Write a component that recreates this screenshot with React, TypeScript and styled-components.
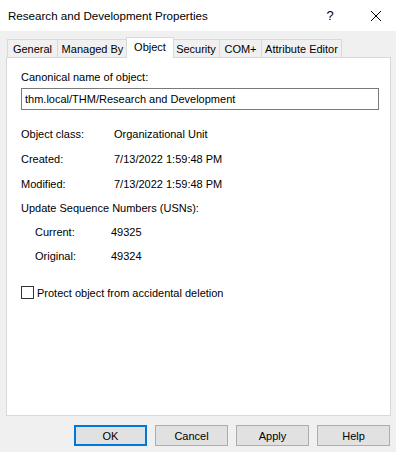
import styled, { createGlobalStyle } from 'styled-components';

const GlobalStyle = createGlobalStyle`
  html, body {
    margin: 0;
    padding: 0;
    background: #f0f0f0;
  }
  body {
    font-family: "Liberation Sans", Arial, sans-serif;
    font-size: 11px;
    color: #000000;
  }
`;

const Window = styled.div`
  width: 396px;
  height: 452px;
  display: flex;
  flex-direction: column;
  background: #f0f0f0;
`;

const TitleBar = styled.div`
  height: 31px;
  background: #ffffff;
  display: flex;
  align-items: center;
  padding-left: 8px;
`;

const Title = styled.div`
  flex: 1;
  font-size: 11.6px;
  color: #000000;
`;

const HelpGlyph = styled.div`
  width: 14px;
  margin-right: 33px;
  font-size: 13px;
  text-align: center;
`;

const CloseButton = styled.div`
  width: 12px;
  height: 12px;
  margin-right: 14px;
  display: flex;
`;

const Body = styled.div`
  flex: 1;
  display: flex;
  flex-direction: column;
  padding: 6px 6px 0 6px;
`;

const TabRow = styled.div`
  height: 20px;
  display: flex;
  align-items: flex-end;
  padding-left: 1px;
`;

const Tab = styled.div<{ $w: number; $active?: boolean }>`
  box-sizing: border-box;
  width: ${(p) => p.$w}px;
  height: ${(p) => (p.$active ? 21 : 18)}px;
  margin-bottom: ${(p) => (p.$active ? -1 : 0)}px;
  margin-left: ${(p) => (p.$active ? -2 : -1)}px;
  margin-right: ${(p) => (p.$active ? -1 : 0)}px;
  border: 1px solid #d9d9d9;
  border-bottom: ${(p) => (p.$active ? 'none' : '0')};
  background: ${(p) => (p.$active ? '#ffffff' : '#f0f0f0')};
  position: relative;
  z-index: ${(p) => (p.$active ? 2 : 1)};
  display: flex;
  align-items: center;
  justify-content: center;
  padding-bottom: ${(p) => (p.$active ? 3 : 0)}px;
  white-space: nowrap;
  font-size: 11px;

  &:first-child {
    margin-left: 0;
  }
`;

const Panel = styled.div`
  box-sizing: border-box;
  width: 385px;
  height: 359px;
  border: 1px solid #d9d9d9;
  background: #ffffff;
  padding: 11px 12px 0 14px;
  display: flex;
  flex-direction: column;
`;

const FieldLabel = styled.div`
  line-height: 16px;
  font-size: 11px;
`;

const TextBox = styled.div`
  box-sizing: border-box;
  margin-top: 3px;
  width: 358px;
  height: 22px;
  border: 1px solid #7a7a7a;
  padding-left: 3px;
  display: flex;
  align-items: center;
  font-size: 11px;
`;

const InfoList = styled.div`
  margin-top: 11px;
  display: flex;
  flex-direction: column;
`;

const InfoRow = styled.div<{ $indent?: boolean; $h: number }>`
  display: flex;
  align-items: center;
  height: ${(p) => p.$h}px;
  padding-left: ${(p) => (p.$indent ? 14 : 0)}px;
  font-size: 11px;
`;

const InfoLabel = styled.div<{ $w: number }>`
  width: ${(p) => p.$w}px;
`;

const CheckRow = styled.label`
  margin-top: 18px;
  display: flex;
  align-items: center;
  gap: 3px;
  font-size: 11px;
`;

const CheckBox = styled.span`
  box-sizing: border-box;
  width: 13px;
  height: 13px;
  border: 1px solid #333333;
  background: #ffffff;
`;

const ButtonBar = styled.div`
  display: flex;
  justify-content: flex-end;
  gap: 8px;
  padding: 9px 0 0 0;
`;

const Button = styled.div<{ $default?: boolean }>`
  box-sizing: border-box;
  width: 73px;
  height: 21px;
  background: #e1e1e1;
  border: ${(p) => (p.$default ? '2px solid #0078d7' : '1px solid #adadad')};
  display: flex;
  align-items: center;
  justify-content: center;
  font-size: 11px;
`;

const tabs = [
  { label: 'General', w: 51 },
  { label: 'Managed By', w: 71 },
  { label: 'Object', w: 48, active: true },
  { label: 'Security', w: 48 },
  { label: 'COM+', w: 43 },
  { label: 'Attribute Editor', w: 81 },
];

const info = [
  { label: 'Object class:', value: 'Organizational Unit', h: 25 },
  { label: 'Created:', value: '7/13/2022 1:59:48 PM', h: 25 },
  { label: 'Modified:', value: '7/13/2022 1:59:48 PM', h: 25 },
];

const usns = [
  { label: 'Current:', value: '49325' },
  { label: 'Original:', value: '49324' },
];

const App = () => {
  return (
    <Window>
      <GlobalStyle />
      <TitleBar>
        <Title>Research and Development Properties</Title>
        <HelpGlyph>?</HelpGlyph>
        <CloseButton>
          <svg width="12" height="12" viewBox="0 0 12 12">
            <path d="M1 1 L11 11 M11 1 L1 11" stroke="#000" strokeWidth="1" fill="none" />
          </svg>
        </CloseButton>
      </TitleBar>

      <Body>
        <TabRow>
          {tabs.map((t) => (
            <Tab key={t.label} $w={t.w} $active={t.active}>
              {t.label}
            </Tab>
          ))}
        </TabRow>

        <Panel>
          <FieldLabel>Canonical name of object:</FieldLabel>
          <TextBox>thm.local/THM/Research and Development</TextBox>

          <InfoList>
            {info.map((r) => (
              <InfoRow key={r.label} $h={r.h}>
                <InfoLabel $w={93}>{r.label}</InfoLabel>
                <div>{r.value}</div>
              </InfoRow>
            ))}
            <InfoRow $h={24}>Update Sequence Numbers (USNs):</InfoRow>
            {usns.map((r) => (
              <InfoRow key={r.label} $h={24} $indent>
                <InfoLabel $w={76}>{r.label}</InfoLabel>
                <div>{r.value}</div>
              </InfoRow>
            ))}
          </InfoList>

          <CheckRow>
            <CheckBox />
            Protect object from accidental deletion
          </CheckRow>
        </Panel>

        <ButtonBar>
          <Button $default>OK</Button>
          <Button>Cancel</Button>
          <Button>Apply</Button>
          <Button>Help</Button>
        </ButtonBar>
      </Body>
    </Window>
  );
};

export default App;
